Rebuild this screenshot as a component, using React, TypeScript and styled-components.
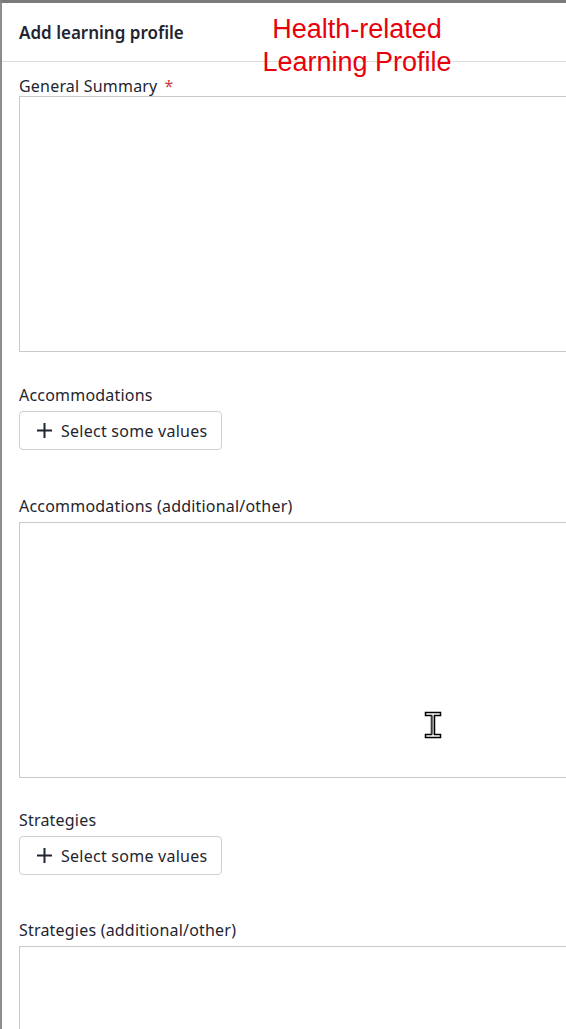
import React from "react";
import styled, { createGlobalStyle } from "styled-components";

const GlobalStyle = createGlobalStyle`
  html, body {
    margin: 0;
    padding: 0;
    background: #ffffff;
  }
  body {
    font-family: "Noto Sans", "Open Sans", sans-serif;
    color: #1f2530;
  }
`;

const Panel = styled.div`
  position: relative;
  box-sizing: border-box;
  width: 566px;
  height: 1029px;
  overflow: hidden;
  background: #ffffff;
  border-top: 3px solid #7b7b7b;
  border-left: 2px solid #8c8c8c;
`;

const Header = styled.div`
  display: flex;
  align-items: center;
  height: 58px;
  padding-left: 17px;
  border-bottom: 1px solid #dcdcdc;
`;

const Title = styled.h1`
  margin: 0;
  font-size: 17px;
  font-weight: 600;
  color: #1f2530;
`;

const Annotation = styled.div`
  position: absolute;
  top: 10px;
  left: 205px;
  width: 300px;
  text-align: center;
  font-family: "Liberation Sans", Arial, sans-serif;
  font-size: 27px;
  line-height: 33px;
  color: #e8000b;
`;

const Body = styled.div`
  display: flex;
  flex-direction: column;
  padding: 14px 0 0 17px;
`;

const Field = styled.div<{ $after: number }>`
  display: flex;
  flex-direction: column;
  align-items: flex-start;
  margin-bottom: ${(p) => p.$after}px;
`;

const Label = styled.label<{ $gap: number }>`
  display: block;
  font-size: 16px;
  letter-spacing: 0.2px;
  line-height: 20px;
  color: #1f2530;
  margin-bottom: ${(p) => p.$gap}px;
`;

const Required = styled.span`
  color: #d23b3b;
  margin-left: 7px;
`;

const TextArea = styled.div`
  box-sizing: border-box;
  width: 600px;
  height: 256px;
  border: 1px solid #c9c9c9;
  background: #ffffff;
`;

const SelectButton = styled.button`
  display: flex;
  align-items: center;
  gap: 8px;
  box-sizing: border-box;
  height: 39px;
  width: 203px;
  padding: 0 0 0 16px;
  border: 1px solid #cfcfcf;
  border-radius: 4px;
  background: #ffffff;
  font-family: "Noto Sans", "Open Sans", sans-serif;
  font-size: 16px;
  letter-spacing: 0.25px;
  color: #1f2530;
  cursor: pointer;
`;

const Cursor = styled.svg`
  position: absolute;
  left: 422px;
  top: 708px;
`;

const PlusIcon = () => (
  <svg width="17" height="17" viewBox="0 0 17 17">
    <path d="M8.5 1v15M1 8.5h15" stroke="#1f2530" strokeWidth="2" />
  </svg>
);

const App: React.FC = () => {
  return (
    <>
      <GlobalStyle />
      <Panel>
        <Header>
          <Title>Add learning profile</Title>
        </Header>
        <Annotation>
          Health-related
          <br />
          Learning Profile
        </Annotation>
        <Body>
          <Field $after={33}>
            <Label $gap={0}>
              General Summary<Required>*</Required>
            </Label>
            <TextArea />
          </Field>
          <Field $after={46}>
            <Label $gap={6}>Accommodations</Label>
            <SelectButton>
              <PlusIcon />
              Select some values
            </SelectButton>
          </Field>
          <Field $after={32}>
            <Label $gap={6}>Accommodations (additional/other)</Label>
            <TextArea />
          </Field>
          <Field $after={45}>
            <Label $gap={6}>Strategies</Label>
            <SelectButton>
              <PlusIcon />
              Select some values
            </SelectButton>
          </Field>
          <Field $after={0}>
            <Label $gap={6}>Strategies (additional/other)</Label>
            <TextArea />
          </Field>
        </Body>
        <Cursor width="18" height="28" viewBox="0 0 18 28">
          <path
            d="M1.5 1.5h15v3h-6v19h6v3h-15v-3h6v-19h-6z"
            fill="#ffffff"
            stroke="#000000"
            strokeWidth="1.5"
          />
          <rect x="7.5" y="4.5" width="2" height="19" fill="#777777" />
        </Cursor>
      </Panel>
    </>
  );
};

export default App;
